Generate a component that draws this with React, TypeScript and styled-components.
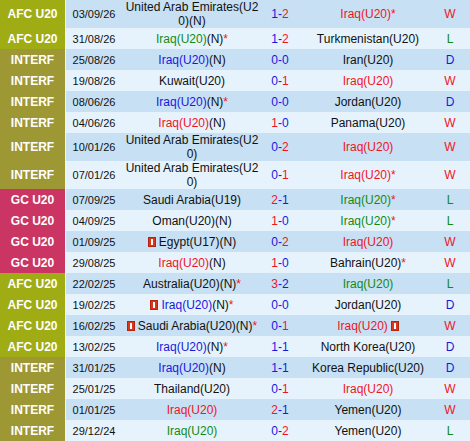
import React from "react";
import styled, { createGlobalStyle } from "styled-components";

type Tone = "k" | "b" | "r" | "g";
type Seg = [string, Tone] | "flag";

interface Match {
	league: "AFC U20" | "INTERF" | "GC U20";
	date: string;
	home: Seg[];
	score: [number, number];
	away: Seg[];
	result: "W" | "L" | "D";
	tall?: boolean;
}

const N: Seg = ["(N)", "k"];
const STAR: Seg = ["*", "r"];

const matches: Match[] = [
	{ league: "AFC U20", date: "03/09/26", home: [["United Arab Emirates(U20)(N)", "k"]], score: [1, 2], away: [["Iraq(U20)*", "r"]], result: "W", tall: true },
	{ league: "AFC U20", date: "31/08/26", home: [["Iraq(U20)", "g"], N, STAR], score: [1, 2], away: [["Turkmenistan(U20)", "k"]], result: "L" },
	{ league: "INTERF", date: "25/08/26", home: [["Iraq(U20)", "b"], N], score: [0, 0], away: [["Iran(U20)", "k"]], result: "D" },
	{ league: "INTERF", date: "19/08/26", home: [["Kuwait(U20)", "k"]], score: [0, 1], away: [["Iraq(U20)", "r"]], result: "W" },
	{ league: "INTERF", date: "08/06/26", home: [["Iraq(U20)", "b"], N, STAR], score: [0, 0], away: [["Jordan(U20)", "k"]], result: "D" },
	{ league: "INTERF", date: "04/06/26", home: [["Iraq(U20)", "r"], N], score: [1, 0], away: [["Panama(U20)", "k"]], result: "W" },
	{ league: "INTERF", date: "10/01/26", home: [["United Arab Emirates(U20)", "k"]], score: [0, 2], away: [["Iraq(U20)", "r"]], result: "W", tall: true },
	{ league: "INTERF", date: "07/01/26", home: [["United Arab Emirates(U20)", "k"]], score: [0, 1], away: [["Iraq(U20)*", "r"]], result: "W", tall: true },
	{ league: "GC U20", date: "07/09/25", home: [["Saudi Arabia(U19)", "k"]], score: [2, 1], away: [["Iraq(U20)", "g"], STAR], result: "L" },
	{ league: "GC U20", date: "04/09/25", home: [["Oman(U20)(N)", "k"]], score: [1, 0], away: [["Iraq(U20)", "g"], STAR], result: "L" },
	{ league: "GC U20", date: "01/09/25", home: ["flag", ["Egypt(U17)(N)", "k"]], score: [0, 2], away: [["Iraq(U20)", "r"]], result: "W" },
	{ league: "GC U20", date: "29/08/25", home: [["Iraq(U20)", "r"], N], score: [1, 0], away: [["Bahrain(U20)", "k"], STAR], result: "W" },
	{ league: "AFC U20", date: "22/02/25", home: [["Australia(U20)(N)", "k"], STAR], score: [3, 2], away: [["Iraq(U20)", "g"]], result: "L" },
	{ league: "AFC U20", date: "19/02/25", home: ["flag", ["Iraq(U20)", "b"], N, STAR], score: [0, 0], away: [["Jordan(U20)", "k"]], result: "D" },
	{ league: "AFC U20", date: "16/02/25", home: ["flag", ["Saudi Arabia(U20)(N)", "k"], STAR], score: [0, 1], away: [["Iraq(U20)", "r"], "flag"], result: "W" },
	{ league: "AFC U20", date: "13/02/25", home: [["Iraq(U20)", "b"], N, STAR], score: [1, 1], away: [["North Korea(U20)", "k"]], result: "D" },
	{ league: "INTERF", date: "31/01/25", home: [["Iraq(U20)", "b"], N], score: [1, 1], away: [["Korea Republic(U20)", "k"]], result: "D" },
	{ league: "INTERF", date: "25/01/25", home: [["Thailand(U20)", "k"]], score: [0, 1], away: [["Iraq(U20)", "r"]], result: "W" },
	{ league: "INTERF", date: "01/01/25", home: [["Iraq(U20)", "r"]], score: [2, 1], away: [["Yemen(U20)", "k"]], result: "W" },
	{ league: "INTERF", date: "29/12/24", home: [["Iraq(U20)", "g"]], score: [0, 2], away: [["Yemen(U20)", "k"]], result: "L" },
];

const tones: Record<Tone, string> = {
	k: "#111111",
	b: "#1818e0",
	r: "#f0141e",
	g: "#138a13",
};

const leagueColors: Record<Match["league"], string> = {
	"AFC U20": "#a0ac14",
	INTERF: "#9d9834",
	"GC U20": "#cb3563",
};

const resultTone: Record<Match["result"], Tone> = { W: "r", L: "g", D: "b" };

// column widths, left to right
const columns = [66, 56, 140, 36, 140, 32];

const GlobalStyle = createGlobalStyle`
	html, body {
		margin: 0;
		padding: 0;
		background: #ffffff;
	}
	body {
		font-family: "Liberation Sans", Arial, sans-serif;
	}
`;

const Table = styled.table`
	width: 470px;
	border-collapse: separate;
	border-spacing: 0;
	table-layout: fixed;
	font-size: 12px;
	line-height: 14px;
`;

const Col = styled.col<{ $w: number }>`
	width: ${(p) => p.$w}px;
`;

const Row = styled.tr<{ $alt: boolean; $tall?: boolean }>`
	height: ${(p) => (p.$tall ? "28px" : "21px")};
	background: ${(p) => (p.$alt ? "#e7f3fc" : "#c7e0f4")};
`;

const Cell = styled.td`
	box-sizing: border-box;
	padding: 0;
	text-align: center;
	vertical-align: middle;
`;

const LeagueCell = styled(Cell)<{ $league: Match["league"] }>`
	background: ${(p) => leagueColors[p.$league]};
	border-right: 1px solid #eef4f8;
	color: #ffffff;
	font-weight: bold;
`;

const DateCell = styled(Cell)`
	font-size: 11px;
	color: #111111;
`;

const TeamCell = styled(Cell)`
	padding: 0 3px;
	word-break: break-all;
`;

const ResultCell = styled(Cell)`
	padding-right: 8px;
`;

const Tinted = styled.span<{ $tone: Tone }>`
	color: ${(p) => tones[p.$tone]};
`;

const CardIcon = styled.svg<{ $after?: boolean }>`
	display: inline-block;
	vertical-align: -1px;
	margin: ${(p) => (p.$after ? "0 0 0 3px" : "0 3px 0 0")};
`;

const Card = ({ after }: { after?: boolean }) => (
	<CardIcon $after={after} width="8" height="10" viewBox="0 0 8 10">
		<rect x="0" y="0" width="8" height="10" fill="#d9361a" />
		<rect x="0.5" y="0.5" width="7" height="9" fill="none" stroke="#b5240c" />
		<rect x="3" y="2" width="2" height="6" fill="#ffffff" />
	</CardIcon>
);

const Team = ({ segs }: { segs: Seg[] }) => (
	<>
		{segs.map((s, i) =>
			s === "flag" ? (
				<Card key={i} after={i > 0} />
			) : (
				<Tinted key={i} $tone={s[1]}>
					{s[0]}
				</Tinted>
			)
		)}
	</>
);

const Score = ({ score }: { score: [number, number] }) => {
	const [a, b] = score;
	return (
		<>
			<Tinted $tone={a > b ? "r" : "b"}>{a}</Tinted>
			<Tinted $tone="b">-</Tinted>
			<Tinted $tone={b > a ? "r" : "b"}>{b}</Tinted>
		</>
	);
};

export default function App() {
	return (
		<>
			<GlobalStyle />
			<Table>
				<colgroup>
					{columns.map((w, i) => (
						<Col key={i} $w={w} />
					))}
				</colgroup>
				<tbody>
					{matches.map((m, i) => (
						<Row key={m.date} $alt={i % 2 === 1} $tall={m.tall}>
							<LeagueCell $league={m.league}>{m.league}</LeagueCell>
							<DateCell>{m.date}</DateCell>
							<TeamCell>
								<Team segs={m.home} />
							</TeamCell>
							<Cell>
								<Score score={m.score} />
							</Cell>
							<TeamCell>
								<Team segs={m.away} />
							</TeamCell>
							<ResultCell>
								<Tinted $tone={resultTone[m.result]}>{m.result}</Tinted>
							</ResultCell>
						</Row>
					))}
				</tbody>
			</Table>
		</>
	);
}
